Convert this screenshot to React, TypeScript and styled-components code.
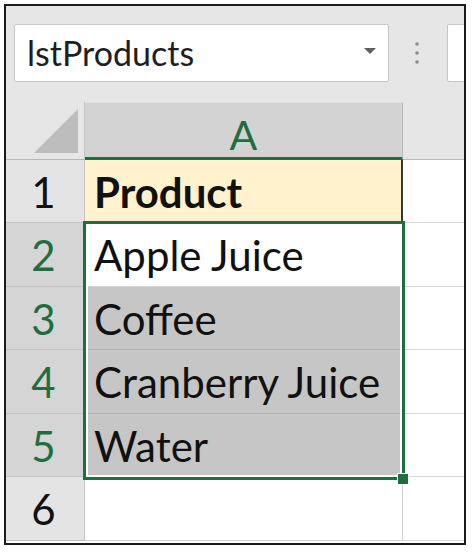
import React from "react";
import styled, { createGlobalStyle } from "styled-components";

const GREEN = "#1f6e40";

const Global = createGlobalStyle`
  html, body { margin: 0; padding: 0; background: #ffffff; }
  body { font-family: Lato, "Open Sans", sans-serif; }
  * { box-sizing: border-box; }
`;

const Frame = styled.div`
  margin: 4px;
  width: 462px;
  height: 541px;
  border: 2px solid #1b1b1b;
  background: #e6e6e6;
  overflow: hidden;
  display: flex;
  flex-direction: column;
`;

const Toolbar = styled.div`
  height: 96px;
  flex: none;
  display: flex;
  align-items: flex-start;
  padding: 18px 0 0 8px;
`;

const NameBox = styled.div`
  width: 375px;
  height: 58px;
  flex: none;
  background: #ffffff;
  border: 1px solid #c6c6c6;
  border-radius: 2px;
  display: flex;
  align-items: center;
  justify-content: space-between;
  padding: 0 12px 2px 12px;
  font-family: Lato, sans-serif;
  font-size: 34px;
  color: #1e1e1e;
`;

const Caret = styled.span`
  width: 0;
  height: 0;
  border-left: 6.5px solid transparent;
  border-right: 6.5px solid transparent;
  border-top: 6px solid #5f5f5f;
  margin-top: -2px;
`;

const DotsWrap = styled.div`
  width: 56px;
  height: 58px;
  flex: none;
  display: flex;
  align-items: center;
  justify-content: center;
`;

const FormulaBox = styled.div`
  flex: none;
  width: 60px;
  height: 58px;
  margin-left: 2px;
  background: #ffffff;
  border: 1px solid #c6c6c6;
  border-radius: 2px;
`;

const Sheet = styled.div`
  position: relative;
  flex: 1;
  display: grid;
  grid-template-columns: 79px 318px 1fr;
  grid-template-rows: 58px 63px 64px 63px 64px 63px 64px;
  background: #ffffff;
`;

const Corner = styled.div`
  background: #e6e6e6;
  border-right: 1px solid #c4c4c4;
  border-bottom: 1px solid #b8b8b8;
  display: flex;
  align-items: flex-end;
  justify-content: flex-end;
  padding: 0 6px 6px 0;
`;

const ColHeader = styled.div<{ $active?: boolean }>`
  background: ${(p) => (p.$active ? "#d3d3d3" : "#e6e6e6")};
  border-top: ${(p) => (p.$active ? "1px solid #e2e2e2" : "none")};
  border-right: ${(p) => (p.$active ? "1px solid #b8b8b8" : "none")};
  border-bottom: ${(p) => (p.$active ? `3px solid ${GREEN}` : "1px solid #b8b8b8")};
  color: ${GREEN};
  font-size: 41px;
  line-height: 1;
  display: flex;
  align-items: center;
  justify-content: center;
  padding-top: 8px;
`;

const RowHeader = styled.div<{ $active?: boolean }>`
  background: ${(p) => (p.$active ? "#d5d5d5" : "#e4e4e4")};
  border-right: 1px solid ${(p) => (p.$active ? "#b5b5b5" : "#c4c4c4")};
  border-bottom: 1px solid #c2c2c2;
  color: ${(p) => (p.$active ? GREEN : "#111111")};
  font-size: 42px;
  line-height: 58px;
  padding-top: 3px;
  text-align: center;
  padding-right: 3px;
`;

const Cell = styled.div<{ $bg?: string; $bold?: boolean; $edge?: string }>`
  background: ${(p) => p.$bg ?? "#ffffff"};
  border-right: ${(p) => (p.$edge ? `2px solid ${p.$edge}` : "1px solid #d4d4d4")};
  border-bottom: 1px solid ${(p) => (p.$bg === "#c6c6c6" ? "#b2b2b2" : "#d4d4d4")};
  font-size: 42px;
  font-weight: ${(p) => (p.$bold ? 700 : 400)};
  color: #111111;
  line-height: 58px;
  padding: 3px 0 0 9px;
  white-space: nowrap;
  overflow: hidden;
`;

const EmptyCell = styled.div`
  background: #ffffff;
  border-bottom: 1px solid #d8d8d8;
`;

const Selection = styled.div`
  position: absolute;
  left: 77px;
  top: 119px;
  width: 322px;
  height: 259px;
  border: 3px solid ${GREEN};
  box-shadow: inset 0 0 0 2px #ffffff;
  pointer-events: none;
`;

const FillHandle = styled.div`
  position: absolute;
  left: 392px;
  top: 372px;
  width: 10px;
  height: 10px;
  background: ${GREEN};
  outline: 1px solid #ffffff;
`;

const rows = [
  { n: 1, text: "Product", bold: true, bg: "#fff2cc", active: false, edge: "#2e3b33" },
  { n: 2, text: "Apple Juice", bg: "#ffffff", active: true },
  { n: 3, text: "Coffee", bg: "#c6c6c6", active: true },
  { n: 4, text: "Cranberry Juice", bg: "#c6c6c6", active: true },
  { n: 5, text: "Water", bg: "#c6c6c6", active: true },
  { n: 6, text: "", bg: "#ffffff", active: false },
];

export default function App() {
  return (
    <>
      <Global />
      <Frame>
        <Toolbar>
          <NameBox>
            <span>lstProducts</span>
            <Caret />
          </NameBox>
          <DotsWrap>
            <svg width="6" height="24" viewBox="0 0 6 24">
              <circle cx="3" cy="3" r="1.8" fill="#8a8a8a" />
              <circle cx="3" cy="12" r="1.8" fill="#8a8a8a" />
              <circle cx="3" cy="21" r="1.8" fill="#8a8a8a" />
            </svg>
          </DotsWrap>
          <FormulaBox />
        </Toolbar>
        <Sheet>
          <Corner>
            <svg width="44" height="44" viewBox="0 0 44 44">
              <polygon points="44,0 44,44 0,44" fill="#bdbdbd" />
            </svg>
          </Corner>
          <ColHeader $active>A</ColHeader>
          <ColHeader />
          {rows.map((r) => (
            <React.Fragment key={r.n}>
              <RowHeader $active={r.active}>{r.n}</RowHeader>
              <Cell $bg={r.bg} $bold={r.bold} $edge={r.edge}>
                {r.text}
              </Cell>
              <EmptyCell />
            </React.Fragment>
          ))}
          <Selection />
          <FillHandle />
        </Sheet>
      </Frame>
    </>
  );
}
